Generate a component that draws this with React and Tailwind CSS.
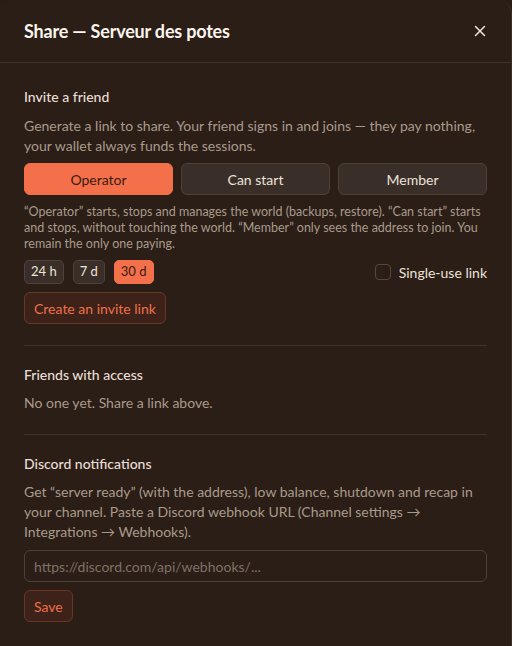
import React, { useState } from "react";
import { X } from "lucide-react";

const roles = ["Operator", "Can start", "Member"];
const durations = ["24 h", "7 d", "30 d"];

export default function App() {
  const [role, setRole] = useState("Operator");
  const [duration, setDuration] = useState("30 d");
  const [singleUse, setSingleUse] = useState(false);
  const [webhook, setWebhook] = useState("");

  return (
    <div
      className="min-h-screen bg-[#2a1d15] text-[#e9dfd6]"
      style={{ fontFamily: "Lato, 'Noto Sans', sans-serif" }}
    >
      <div className="w-[512px] h-[646px] rounded-t-[14px] bg-[#2b1e16] border-r border-[#3a2d24]">
        {/* Header */}
        <header className="h-[63px] px-6 flex items-center justify-between border-b border-[#40332a]">
          <h2 className="text-[18px] font-bold text-[#fbf5ef] tracking-[-0.2px]">
            Share — Serveur des potes
          </h2>
          <button className="text-[#efe6dd] -mr-0.5">
            <X className="w-[18px] h-[18px]" strokeWidth={2} />
          </button>
        </header>

        <main className="px-6">
          {/* Invite */}
          <section className="pt-[24px] pb-[21px] border-b border-[#40332a]">
            <h3 className="text-[14px] font-medium leading-5">Invite a friend</h3>
            <p className="mt-[9px] text-[14px] leading-5 text-[#a99a8c]">
              Generate a link to share. Your friend signs in and joins — they pay nothing, your wallet always funds the sessions.
            </p>
            <div className="mt-[7px] grid grid-cols-3 gap-2">
              {roles.map((r) => (
                <button
                  key={r}
                  onClick={() => setRole(r)}
                  className={
                    r === role
                      ? "h-8 rounded-md bg-[#f4704b] text-[#3a1b10] text-[14px] border border-[#f4704b]"
                      : "h-8 rounded-md bg-[#3a2f28] border border-[#4d4138] text-[#ece3da] text-[14px]"
                  }
                >
                  {r}
                </button>
              ))}
            </div>
            <p className="mt-[9px] text-[12.5px] leading-4 text-[#a99a8c]">
              “Operator” starts, stops and manages the world (backups, restore). “Can start” starts and stops, without touching the world. “Member” only sees the address to join. You remain the only one paying.
            </p>
            <div className="mt-[8px] flex items-center justify-between">
              <div className="flex gap-[9px]">
                {durations.map((d) => (
                  <button
                    key={d}
                    onClick={() => setDuration(d)}
                    className={
                      d === duration
                        ? "h-6 px-[6px] rounded-[5px] bg-[#f4704b] border border-[#f4704b] text-[#3a1b10] text-[13px]"
                        : "h-6 px-[6px] rounded-[5px] bg-[#3a2f28] border border-[#4d4138] text-[#ece3da] text-[13px]"
                    }
                  >
                    {d}
                  </button>
                ))}
              </div>
              <label className="flex items-center gap-2 cursor-pointer">
                <input
                  type="checkbox"
                  checked={singleUse}
                  onChange={(e) => setSingleUse(e.target.checked)}
                  className="appearance-none w-4 h-4 rounded-[4px] border border-[#55483f] bg-transparent checked:bg-[#f4704b]"
                />
                <span className="text-[14px] text-[#ece3da]">Single-use link</span>
              </label>
            </div>
            <button className="mt-2 h-8 px-[9px] rounded-md bg-[#3c2219] border border-[#6a3526] text-[#f0704b] text-[14px]">
              Create an invite link
            </button>
          </section>

          {/* Friends */}
          <section className="pt-[19px] pb-[21px] border-b border-[#40332a]">
            <h3 className="text-[14px] font-medium leading-5">Friends with access</h3>
            <p className="mt-2 text-[14px] leading-5 text-[#a99a8c]">
              No one yet. Share a link above.
            </p>
          </section>

          {/* Discord */}
          <section className="pt-[19px]">
            <h3 className="text-[14px] font-medium leading-5">Discord notifications</h3>
            <p className="mt-2 text-[14px] leading-5 text-[#a99a8c]">
              Get “server ready” (with the address), low balance, shutdown and recap in your channel. Paste a Discord webhook URL (Channel settings → Integrations → Webhooks).
            </p>
            <input
              value={webhook}
              onChange={(e) => setWebhook(e.target.value)}
              placeholder="https://discord.com/api/webhooks/..."
              className="mt-[8px] w-full h-8 px-[9px] rounded-md bg-transparent border border-[#4d4138] text-[14px] text-[#ece3da] placeholder:text-[#7f7167] outline-none"
            />
            <button className="mt-2 h-8 px-[9px] rounded-md bg-[#3c2219] border border-[#6a3526] text-[#f0704b] text-[14px]">
              Save
            </button>
          </section>
        </main>
      </div>
    </div>
  );
}
